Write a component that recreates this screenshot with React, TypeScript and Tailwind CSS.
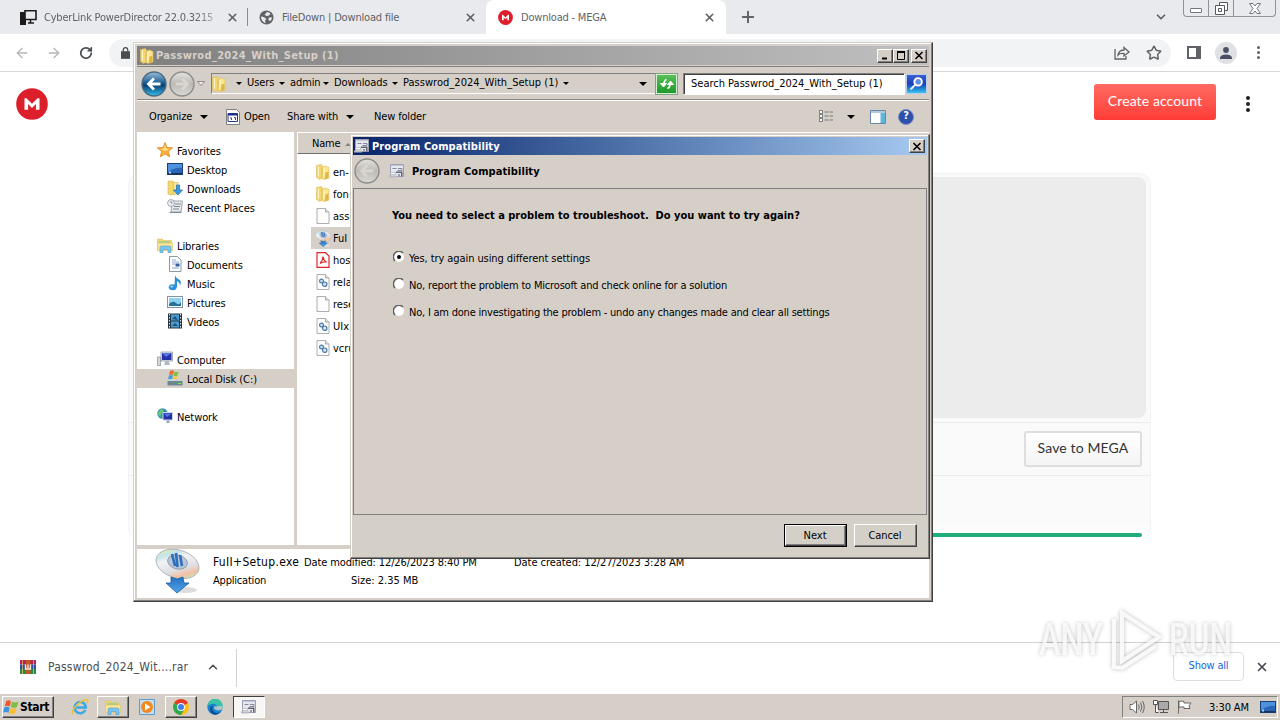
import React from 'react';
import { ChevronDown, ChevronUp, Plus, RotateCw, X, ArrowLeft, ArrowRight, Star } from 'lucide-react';

const RAISED = 'border border-t-white border-l-white border-r-[#404040] border-b-[#404040] shadow-[inset_-1px_-1px_0_#808080]';
const WINDOW = 'border border-t-[#d4d0c8] border-l-[#d4d0c8] border-r-[#404040] border-b-[#404040] shadow-[inset_-1px_-1px_0_#808080,inset_1px_1px_0_#fff]';
const FACE = 'bg-[#d6cfc8]';

/* ---------- icons ---------- */

const FolderIcon = ({ className = 'w-4 h-4' }) => (
  <svg viewBox="0 0 16 16" className={className}>
    <path d="M1.500 1.500l5-1 1 2V14l-3 1.500-3-2z" fill="#f3d66f" stroke="#dcbb55" strokeWidth=".6" />
    <path d="M7.500 3l3-1 3.500 1.500V14l-5 1.500-2-1z" fill="#fbe58f" stroke="#dcbb55" strokeWidth=".6" />
    <path d="M10.500 8.500l3-1V14l-4 1.500z" fill="#dfb647" />
    <path d="M3.500 2.500v10M9 4v9" stroke="#fff6c8" />
    <path d="M7 3v11" stroke="#d9b858" strokeWidth=".6" />
  </svg>
);

const StarIcon = () => (
  <svg viewBox="0 0 16 16" className="w-4 h-4">
    <path d="M8 .5l2 5 5.700.3-4.400 3.600 1.500 5.500L8 11.900l-4.800 3 1.500-5.500L.3 5.800 6 5.500z" fill="#fbb03a" stroke="#e58325" strokeWidth=".8" />
    <path d="M8 2.500l1 4 4 .3L8 9 3.500 7l3.300-.5z" fill="#ffdc80" />
  </svg>
);

const DesktopIcon = () => (
  <svg viewBox="0 0 16 16" className="w-4 h-4">
    <rect x=".5" y="2.500" width="15" height="11" fill="#2a66b8" stroke="#1b3f7a" />
    <path d="M1 3h14v4Q8 6 1 11z" fill="#4d92dd" />
    <path d="M1 12h14v1.500H1z" fill="#17325f" />
    <path d="M2 10.500h2v2H2z" fill="#a9d4f7" />
  </svg>
);

const DownloadsIcon = () => (
  <svg viewBox="0 0 16 16" className="w-4 h-4">
    <path d="M1 1h5l1 2v11l-3 1-3-1z" fill="#f3d66f" stroke="#d9b64a" strokeWidth=".6" />
    <path d="M6 2.500h5v11l-4 1.500z" fill="#fbe58f" stroke="#d9b64a" strokeWidth=".6" />
    <path d="M9.500 5h3v5H15.500L11 15 6.500 10h3z" fill="#3b9be0" stroke="#1b6cb0" strokeWidth=".7" />
  </svg>
);

const RecentIcon = () => (
  <svg viewBox="0 0 16 16" className="w-4 h-4">
    <path d="M5 2h10.500l-1.500 11H4z" fill="#e6e9ec" stroke="#8a939b" strokeWidth=".8" />
    <path d="M8 5h6M7 7.500h6M6 10h6M2.500 13.500h12" stroke="#7d8891" />
    <circle cx="4" cy="4" r="3.400" fill="#eef3f7" stroke="#8a939b" strokeWidth=".8" />
    <path d="M4 2v2h1.500" stroke="#5a6a78" fill="none" strokeWidth=".8" />
  </svg>
);

const LibraryIcon = ({ className = 'w-4 h-4' }) => (
  <svg viewBox="0 0 16 16" className={className}>
    <path d="M.5 2h5l1 1.500h8V13H.5z" fill="#f3d670" stroke="#dcc068" strokeWidth=".6" />
    <path d="M2 4h11v3H2z" fill="#a8d18b" />
    <path d="M.5 6h15v7.500H.5z" fill="#fbe794" stroke="#dcc068" strokeWidth=".6" />
    <path d="M3 15.500V10.500Q3 9 4.500 9h8Q14 9 14 10.500v5h-3v-3H6v3z" fill="#7cc4ee" stroke="#4a9ccb" strokeWidth=".6" />
  </svg>
);

const DocumentIcon = () => (
  <svg viewBox="0 0 16 16" className="w-4 h-4">
    <path d="M2.500 .5h8l3.500 3.500V15.500H2.500z" fill="#fff" stroke="#8b98a5" />
    <path d="M5 4h4M5 6h7M5 8h3M5 12h7" stroke="#8cacd0" />
    <path d="M8.500 7.500h4v3h-4z" fill="#2f5f9e" />
  </svg>
);

const MusicIcon = () => (
  <svg viewBox="0 0 16 16" className="w-4 h-4">
    <path d="M8 .5q1 2.500 4 4t1 6.500q0-3.500-3-5V12H7.500z" fill="#2c8fdb" />
    <ellipse cx="5.700" cy="12.300" rx="3.900" ry="3" fill="#2c8fdb" />
    <ellipse cx="4.800" cy="11.500" rx="1.700" ry="1" fill="#8fd0fa" />
  </svg>
);

const PictureIcon = () => (
  <svg viewBox="0 0 16 16" className="w-4 h-4">
    <rect x=".5" y="2.500" width="15" height="11" fill="#fff" stroke="#7d93a8" />
    <path d="M2 4h12v8H2z" fill="#8ed0f0" />
    <path d="M2 10q4-4 7-1t5-1v4H2z" fill="#24719c" />
  </svg>
);

const VideoIcon = () => (
  <svg viewBox="0 0 16 16" className="w-4 h-4">
    <path d="M1 .5h14v15H1z" fill="#263544" />
    <path d="M4 1.500h8v6H4zM4 8.500h8v6H4z" fill="#4a9bd0" />
    <path d="M2.500 1v14M13.500 1v14" stroke="#dfe7ee" strokeDasharray="1.500 1.500" />
    <path d="M5 6l3-3 3 4zM5 13l3-3 3 3z" fill="#1f5378" />
  </svg>
);

const ComputerIcon = () => (
  <svg viewBox="0 0 16 16" className="w-4 h-4">
    <path d="M.5 6h3v8.500h-3z" fill="#d4d9de" stroke="#808b95" strokeWidth=".7" />
    <path d="M4 1h11.500v9H4z" fill="#dfe5ee" stroke="#8390a3" strokeWidth=".7" />
    <path d="M5 2h9.500v7H5z" fill="#2431a8" />
    <path d="M5 2h9.500L9 6z" fill="#5a76e0" />
    <path d="M8.500 10h3l1.500 4H7z" fill="#b0b8c4" />
  </svg>
);

const DiskIcon = () => (
  <svg viewBox="0 0 16 16" className="w-4 h-4">
    <path d="M3 1q2-1.500 4 0L6 5Q4.500 4 2 5z" fill="#f06a35" />
    <path d="M7.500 1.500q2 1 4 0l-1 4q-2 1-4 0z" fill="#7cc142" />
    <path d="M2 5.500q2-1 4 0L5 9H1z" fill="#3e9de0" />
    <path d="M6.500 6q2 1 4 0L9.500 9h-4z" fill="#fbc436" />
    <path d="M1 9h12l2.500 2H.5z" fill="#c8d1d6" />
    <path d="M.5 11h15v4.500H.5z" fill="#6d8791" />
    <path d="M11 13h3v1h-3z" fill="#6df04f" />
  </svg>
);

const NetworkIcon = () => (
  <svg viewBox="0 0 16 16" className="w-4 h-4">
    <circle cx="5.500" cy="5.500" r="5.200" fill="#2f8fb8" />
    <path d="M1 5q2-4 5-4 1 3-1 4t-1 4Q1 8 1 5z" fill="#6cc57c" />
    <path d="M6 4.500h9.500V12H6z" fill="#2431a8" stroke="#cbd4e4" />
    <path d="M7 5.500h7.500L10 9z" fill="#5a76e0" />
    <path d="M9.500 12.500h3V15h-3z" fill="#9ba6b6" />
  </svg>
);

const FileIcon = ({ children }: { children?: React.ReactNode }) => (
  <svg viewBox="0 0 16 16" className="w-4 h-4">
    <path d="M2 .5h8.500l3.500 3.500v11.500H2z" fill="#fdfdfd" stroke="#9b9b9b" strokeWidth=".8" />
    <path d="M10.500.5V4H14" fill="#e8e8e8" stroke="#9b9b9b" strokeWidth=".8" />
    {children}
  </svg>
);

const DllIcon = () => (
  <FileIcon>
    <circle cx="6.500" cy="7" r="1.900" fill="#d5e6f6" stroke="#4a7ba8" strokeWidth="1.200" />
    <circle cx="9.700" cy="10.200" r="2.200" fill="#d5e6f6" stroke="#4a7ba8" strokeWidth="1.200" />
  </FileIcon>
);

const PdfIcon = () => (
  <svg viewBox="0 0 16 16" className="w-4 h-4">
    <path d="M2 .7h8.500L14 4v11.300H2z" fill="#fff" stroke="#e3262b" strokeWidth="1.200" />
    <path d="M5 11.500q3-3 3-7Q8.500 8.500 11.500 10 8 9.500 5 11.500z" fill="none" stroke="#e3262b" strokeWidth="1.200" />
  </svg>
);

const SetupIcon = ({ className = 'w-[17px] h-[17px]' }) => (
  <svg viewBox="0 0 46 46" className={className}>
    <defs>
      <linearGradient id="disc" x1="0" y1="0" x2="1" y2="1">
        <stop offset="0" stopColor="#d8c4e0" />
        <stop offset=".14" stopColor="#e2ecb8" />
        <stop offset=".24" stopColor="#c5e4e8" />
        <stop offset=".38" stopColor="#f1f2f4" />
        <stop offset=".62" stopColor="#dddfe2" />
        <stop offset=".76" stopColor="#f4bfa0" />
        <stop offset=".86" stopColor="#c6e8b8" />
        <stop offset="1" stopColor="#cfd3de" />
      </linearGradient>
      <linearGradient id="arrow" x1="0" y1="0" x2="0" y2="1">
        <stop offset="0" stopColor="#2672c4" />
        <stop offset="1" stopColor="#4fa3ea" />
      </linearGradient>
    </defs>
    <ellipse cx="31" cy="42" rx="11" ry="3" fill="#ddd" />
    <ellipse cx="22.500" cy="16" rx="22" ry="14" transform="rotate(16 22.500 16)" fill="url(#disc)" stroke="#a9adb3" strokeWidth=".8" />
    <ellipse cx="22.500" cy="14" rx="10" ry="7" transform="rotate(14 22.500 14)" fill="#b9c6d4" stroke="#8997a8" strokeWidth=".9" />
    <path d="M17 6l3 12M21 5l1.500 14M25 7l2 11" stroke="#2b6fc0" strokeWidth="2.600" />
    <path d="M16 29l6 2 6-2 1 6h5L22 45 11 35h5z" fill="url(#arrow)" stroke="#1f5c9f" strokeWidth=".8" />
  </svg>
);

const CompatIcon = ({ className = 'w-4 h-4' }) => (
  <svg viewBox="0 0 16 16" className={className}>
    <path d="M1.500 1.500h13v12h-13z" fill="#e6e7ef" stroke="#9da0b4" />
    <path d="M2 2h12v1H2z" fill="#c3c7dc" />
    <path d="M3.500 5.500h4M9 5.500h4v2H8.500" fill="none" stroke="#85889a" />
    <path d="M7 8.500h6.500v5H12V10H7z" fill="#62656f" />
    <path d="M1.500 9.500h5v2h-5z" fill="#fff" stroke="#a0a2ac" strokeWidth=".6" />
    <path d="M0 12.500h8v2H0z" fill="#b9bbc4" />
    <path d="M9 11h2v2.500H9z" fill="#9a9da8" />
  </svg>
);

const OpenIcon = () => (
  <svg viewBox="0 0 14 16" className="w-[14px] h-4">
    <path d="M.5.500h10l3 3v12H.5z" fill="#fff" stroke="#808080" />
    <path d="M2 4.500h9.500v8H2z" fill="#fff" stroke="#223a8a" />
    <path d="M2 4.500h9.500v2H2z" fill="#1d2f8a" />
    <path d="M4 9h1.500v2M8 8.500h1.500V11" stroke="#3a4a9a" fill="none" />
  </svg>
);

const MegaLogo = ({ className = '' }) => (
  <svg viewBox="0 0 32 32" className={className}>
    <circle cx="16" cy="16" r="15.800" fill="#dc1f2b" />
    <path d="M8.500 21.800V10.200h1.900l5.600 5.600 5.600-5.600h1.900v11.600h-3.600v-5.700L16 19.900l-3.900-3.800v5.700z" fill="#fff" />
  </svg>
);

const GlobeIcon = () => (
  <svg viewBox="0 0 16 16" className="w-[15px] h-[15px]">
    <circle cx="8" cy="8" r="7.500" fill="#5f6368" />
    <path d="M2 7l3 .5 3 2-1.500 1.500L7 14Q2.500 12.500 2 7zM8.500 2l3 1 .5 1.500-2 1.500-2 .500L6 5zM10.500 8l3.500 0q-.5 3-2.500 4l-1.500-2z" fill="#e8eaed" />
  </svg>
);

const PcIcon = () => (
  <svg viewBox="0 0 17 16" className="w-[17px] h-4">
    <path d="M0 3h6v13H0z" fill="#1c1c1c" />
    <path d="M5 1.800h11v8.700H5z" fill="#e8eaed" stroke="#1c1c1c" strokeWidth="1.600" />
    <path d="M8 14h6M10.500 11v3" stroke="#1c1c1c" strokeWidth="1.500" />
  </svg>
);

const RarIcon = () => (
  <svg viewBox="0 0 16 16" className="w-4 h-4">
    <path d="M0 1h16v4.500H0z" fill="#b0245a" />
    <path d="M0 5.500h16V10H0z" fill="#2c52a8" />
    <path d="M0 10h16v5H0z" fill="#2b8a43" />
    <path d="M6 1h4.500v14H6z" fill="#c5571f" />
    <path d="M5.500 5.500v4.500h5V5.500M8 5.500V9" fill="none" stroke="#f5eee0" strokeWidth="1.300" />
    <path d="M2.500 1v14M13.500 1v14" stroke="#f0c26a" strokeWidth=".7" />
  </svg>
);

const ChromeIcon = () => (
  <svg viewBox="0 0 16 16" className="w-4 h-4">
    <circle cx="8" cy="8" r="8" fill="#fbc116" />
    <path d="M8 8L1.100 4A8 8 0 0 1 14.900 4z" fill="#e33b2e" />
    <path d="M8 8L1.100 4A8 8 0 0 0 8 16l3-5z" fill="#2da94f" />
    <circle cx="8" cy="8" r="3.900" fill="#fff" />
    <circle cx="8" cy="8" r="3" fill="#3f7fe8" />
  </svg>
);

const EdgeIcon = () => (
  <svg viewBox="0 0 16 16" className="w-4 h-4">
    <circle cx="8" cy="8" r="7.700" fill="#1583cf" />
    <path d="M.5 7A7.600 7.600 0 0 1 15.700 7.500q0 3-3.300 3-2.500 0-2.400-1.500.8-1 0-2.300Q7 3.500 3 5.500.8 6.500.5 7z" fill="#37c3a5" />
    <path d="M6 7q-2 3 .5 5.500t7 .5Q11 16 7.500 15.700 2.500 14 3 9q.5-2 3-2z" fill="#0b4c93" />
    <path d="M7 7.500q-.8 4 5 4l3-1q1-1 .7-3l-2.500-.5z" fill="#d6cfc8" opacity=".75" />
  </svg>
);

const IeIcon = () => (
  <svg viewBox="0 0 18 18" className="w-[18px] h-[18px]">
    <path d="M14.300 12A5.600 5.600 0 1 1 14.800 9.500H5" fill="none" stroke="#3fa9e2" strokeWidth="2.600" />
    <path d="M2 16Q-.5 14 5 8t11-6.500Q18 2 16 5" fill="none" stroke="#f0bf3a" strokeWidth="1.500" />
  </svg>
);

const WmpIcon = () => (
  <svg viewBox="0 0 16 16" className="w-4 h-4">
    <path d="M.5.500h15v15H.5z" fill="#c3def2" stroke="#5f9ccc" />
    <circle cx="8" cy="8" r="6" fill="#f08a1e" />
    <path d="M6 4.500v7L11.500 8z" fill="#fff" />
  </svg>
);

const WindowsFlag = () => (
  <svg viewBox="0 0 16 16" className="w-[17px] h-[17px] shrink-0">
    <path d="M3 2q2-1.500 4.500 0L6.500 7Q4 5.500 1.500 7z" fill="#ee5a2b" />
    <path d="M8.500 2.500q2.500 1.500 6 0l-1.500 5q-2.500 1.500-5.500 0z" fill="#7bbf3a" />
    <path d="M1.200 8q2.500-1.500 5 0l-1 5Q2.700 11.500 0 13z" fill="#3c95dc" />
    <path d="M7.200 8.500q2.500 1.500 5.500 0l-1.500 5q-2.500 1.500-5.500 0z" fill="#f9bd2d" />
  </svg>
);

const Caret = ({ small = false }) => (
  <svg viewBox="0 0 8 4" className={small ? 'w-[6px] h-[3px]' : 'w-[8px] h-[4px]'}>
    <path d="M0 0h8L4 4z" fill="#000" />
  </svg>
);

const RoundArrow = ({ dir, active = false }: { dir: 'left' | 'right'; active?: boolean }) => (
  <svg viewBox="0 0 26 26" className="w-[26px] h-[26px]">
    <defs>
      <linearGradient id="blueBall" x1="0" y1="0" x2="0" y2="1">
        <stop offset="0" stopColor="#9dbfd8" />
        <stop offset=".45" stopColor="#1c5f95" />
        <stop offset=".55" stopColor="#0b3f70" />
        <stop offset="1" stopColor="#35c0ee" />
      </linearGradient>
      <linearGradient id="greyBall" x1="0" y1="0" x2="0" y2="1">
        <stop offset="0" stopColor="#e4e2df" />
        <stop offset=".5" stopColor="#bdbab6" />
        <stop offset="1" stopColor="#dcdad6" />
      </linearGradient>
    </defs>
    <circle cx="13" cy="13" r="12" fill={active ? 'url(#blueBall)' : 'url(#greyBall)'} stroke={active ? '#4c6c85' : '#8d8c8a'} strokeWidth="1.400" />
    <g transform={dir === 'right' ? 'matrix(-1 0 0 1 26 0)' : undefined}>
      <path d="M19.500 13H8M13 7.500L7.500 13l5.500 5.500" fill="none" stroke={active ? '#fff' : '#d9d6d2'} strokeWidth="2.800" />
    </g>
  </svg>
);

/* ---------- browser ---------- */

const Browser = () => (
  <div className="flex-1 flex flex-col bg-white text-[#5f6368]">
    <div className="h-[34px] shrink-0 bg-[#e8eaed] flex items-start text-[11px]">
      <div className="w-[247px] h-[34px] pl-[20px] pr-[8px] flex items-center">
        <PcIcon />
        <span className="ml-[7px] pt-[2px] w-[172px] whitespace-nowrap tracking-[-0.2px] [mask-image:linear-gradient(90deg,#000_88%,#0005)]">CyberLink PowerDirector 22.0.3215</span>
        <X className="ml-[10px] w-[13px] h-[13px] shrink-0" strokeWidth={3} />
      </div>
      <div className="w-px h-[18px] mt-2 bg-[#8a8d91]" />
      <div className="w-[238px] h-[34px] pl-[11px] pr-[9px] flex items-center">
        <GlobeIcon />
        <span className="ml-[8px] pt-[2px] flex-1 whitespace-nowrap tracking-[-0.180px]">FileDown | Download file</span>
        <X className="w-[13px] h-[13px]" strokeWidth={3} />
      </div>
      <div className="w-[240px] h-[34px] pl-[12px] pr-[10px] flex items-center bg-white rounded-t-lg">
        <MegaLogo className="w-[15px] h-[15px]" />
        <span className="ml-[8px] pt-[2px] flex-1 whitespace-nowrap tracking-[-0.2px]">Download - MEGA</span>
        <X className="w-[13px] h-[13px]" strokeWidth={3} />
      </div>
      <Plus className="ml-[13px] mt-2 w-[18px] h-[18px]" strokeWidth={2.6} />
      <ChevronDown className="ml-auto mr-[15px] mt-[10px] w-[14px] h-[14px]" strokeWidth={3} />
      <div className="w-[93px] h-[17px] mr-[4px] flex border border-t-0 border-[#8f9296] rounded-b-[4px]">
        <div className="w-[25px] border-r border-[#8f9296] flex justify-center pt-[8px]">
          <div className="w-3 h-[5px] border border-[#73767a] bg-white rounded-[1px]" />
        </div>
        <div className="w-[25px] border-r border-[#8f9296] flex justify-center pt-[2px]">
          <svg viewBox="0 0 13 13" className="w-[13px] h-[13px]" fill="#fff" stroke="#55585c">
            <path d="M4.500.500h8v8h-8z" />
            <path d="M.5 3.500h9v9h-9zM3.500 6.500h3v3h-3z" />
          </svg>
        </div>
        <div className="flex-1 flex justify-center pt-[3px]">
          <svg viewBox="0 0 12 11" className="w-3 h-[11px]" fill="#fff" stroke="#73767a">
            <path d="M.5.500h3.500l2 2.500 2-2.500h3.500L8 5.500l3.500 5H8L6 8l-2 2.500H.5L4 5.500z" />
          </svg>
        </div>
      </div>
    </div>

    <div className="h-[38px] shrink-0 flex items-center border-b border-[#d5d7da]">
      <ArrowLeft className="ml-[14px] w-4 h-4 text-[#b5b7ba]" />
      <ArrowRight className="ml-4 w-4 h-4 text-[#b5b7ba]" />
      <RotateCw className="ml-[17px] w-[14px] h-[14px] text-[#4a4d51]" strokeWidth={3} />
      <div className="ml-[16px] w-[1062px] h-[28px] rounded-full bg-[#f1f3f4] flex items-center justify-between pl-[12px] pr-[9px]">
        <svg viewBox="0 0 10 13" className="w-[9px] h-[12px]">
          <path d="M0 4.500h10V13H0z" fill="#4a4d51" />
          <path d="M2.500 5V3a2.500 2.500 0 0 1 5 0v2" fill="none" stroke="#4a4d51" strokeWidth="1.400" />
        </svg>
        <div className="flex items-center gap-[16px]">
          <svg viewBox="0 0 16 14" className="w-4 h-[14px]" fill="none" stroke="#5f6368" strokeWidth="1.300">
            <path d="M1 3v10h11v-3" />
            <path d="M4 9q1-5 6-5V1.500L15 6l-5 4V7.500Q6 7 4 9z" />
          </svg>
          <Star className="w-4 h-4" strokeWidth={2.3} />
        </div>
      </div>
      <div className="ml-[16px] w-[14px] h-[13px] border-2 border-r-[5px] border-[#5f6368]" />
      <div className="ml-[14px] w-[22px] h-[22px] rounded-full bg-[#dfe1e5] flex justify-center pt-[5px]">
        <svg viewBox="0 0 12 12" className="w-3 h-3" fill="#4b5066">
          <circle cx="6" cy="3" r="2.900" />
          <path d="M0 12v-1.500Q1 7.500 6 7.500t6 3V12z" />
        </svg>
      </div>
      <div className="ml-[20px] flex flex-col gap-[2px]">
        <i className="w-[3px] h-[3px] rounded-full bg-[#5f6368]" />
        <i className="w-[3px] h-[3px] rounded-full bg-[#5f6368]" />
        <i className="w-[3px] h-[3px] rounded-full bg-[#5f6368]" />
      </div>
    </div>

    <div className="h-[570px] shrink-0 font-[Lato,sans-serif] text-[#303233]">
      <div className="h-[101px] pt-[12px] pl-4 pr-[30px] flex justify-between">
        <MegaLogo className="mt-1 w-8 h-8" />
        <div className="flex">
          <div className="w-[122px] h-9 pb-[3px] rounded-[3px] bg-gradient-to-b from-[#ff6a61] to-[#ff3a36] text-white text-[14px] tracking-[0.1px] flex items-center justify-center">Create account</div>
          <div className="ml-[30px] mt-[12px] flex flex-col gap-[2px]">
            <i className="w-[4px] h-[4px] rounded-full bg-[#222]" />
            <i className="w-[4px] h-[4px] rounded-full bg-[#222]" />
            <i className="w-[4px] h-[4px] rounded-full bg-[#222]" />
          </div>
        </div>
      </div>
      <div className="ml-[128px] w-[1023px] h-[367px] rounded-xl border border-b-0 border-[#f3f3f3] bg-gradient-to-b from-[#fafafa] from-95% to-white pt-[3px]">
        <div className="mx-1 h-[241px] rounded-lg bg-[#ececec]" />
        <div className="mt-[4px] h-[54px] border-y border-[#ebebeb] flex items-center justify-end pr-[8px]">
          <div className="w-[118px] h-[36px] pb-[3px] rounded-[3px] border-2 border-[#dedede] bg-gradient-to-b from-white to-[#f4f4f4] text-[14px] tracking-[0.130px] flex items-center justify-center">Save to MEGA</div>
        </div>
        <div className="mt-[57px] ml-2 mr-[8px] h-[4px] rounded-full bg-[#1fae79]" />
      </div>
    </div>

    <div className="h-[51px] shrink-0 border-t border-[#cfd1d3] flex items-center pl-[20px] pr-[11px] text-[#4a4d51]">
      <span className="mb-[2px]"><RarIcon /></span>
      <span className="ml-3 mb-[2px] w-[145px] text-[12px] tracking-[0.2px] whitespace-nowrap">Passwrod_2024_Wit....rar</span>
      <ChevronUp className="ml-[13px] mb-[2px] w-[14px] h-[14px]" strokeWidth={2.5} />
      <div className="ml-[16px] w-px h-[38px] bg-[#d0d2d4]" />
      <div className="ml-auto mb-[3px] w-[71px] h-[29px] rounded border border-[#dcdee1] flex items-center justify-center text-[11px] tracking-[-0.2px] text-[#1a67d8]">Show all</div>
      <X className="ml-[11px] mb-[2px] w-[14px] h-[14px]" strokeWidth={3} />
    </div>
  </div>
);

/* ---------- explorer ---------- */

const NAV = [
  { label: 'Favorites', icon: <StarIcon />, root: true },
  { label: 'Desktop', icon: <DesktopIcon /> },
  { label: 'Downloads', icon: <DownloadsIcon /> },
  { label: 'Recent Places', icon: <RecentIcon /> },
  null,
  { label: 'Libraries', icon: <LibraryIcon />, root: true },
  { label: 'Documents', icon: <DocumentIcon /> },
  { label: 'Music', icon: <MusicIcon /> },
  { label: 'Pictures', icon: <PictureIcon /> },
  { label: 'Videos', icon: <VideoIcon /> },
  null,
  { label: 'Computer', icon: <ComputerIcon />, root: true },
  { label: 'Local Disk (C:)', icon: <DiskIcon />, selected: true },
  null,
  { label: 'Network', icon: <NetworkIcon />, root: true },
];

const FILES = [
  { name: 'en-', icon: <FolderIcon /> },
  { name: 'fon', icon: <FolderIcon /> },
  { name: 'ass', icon: <FileIcon /> },
  { name: 'FuI', icon: <SetupIcon />, selected: true },
  { name: 'hos', icon: <PdfIcon /> },
  { name: 'rela', icon: <DllIcon /> },
  { name: 'rese', icon: <FileIcon /> },
  { name: 'UIx', icon: <DllIcon /> },
  { name: 'vcru', icon: <DllIcon /> },
];

const CaptionButton = ({ children, className = '' }: { children: React.ReactNode; className?: string }) => (
  <div className={`w-4 h-[14px] flex items-center justify-center ${FACE} ${RAISED} ${className}`}>
    <svg viewBox="0 0 10 9" className="w-[10px] h-[9px] shrink-0" fill="none" stroke="#000">{children}</svg>
  </div>
);

const Explorer = () => (
  <div className={`absolute left-[133px] top-[42px] w-[800px] h-[560px] p-[3px] flex flex-col ${FACE} ${WINDOW}`}>
    <div className="h-[19px] shrink-0 pl-[2px] pr-[2px] flex items-center bg-gradient-to-r from-[#808080] to-[#c0c0c0] text-[#d6cfc8] font-bold text-[11px]">
      <FolderIcon />
      <span className="ml-[1px] pt-px tracking-[0.320px]">Passwrod_2024_With_Setup (1)</span>
      <CaptionButton className="ml-auto"><path d="M2 7.500h5" strokeWidth="2" /></CaptionButton>
      <CaptionButton><path d="M1 1h8" strokeWidth="2" /><path d="M1.500 0v8.500h7V0" /></CaptionButton>
      <CaptionButton className="ml-[2px]"><path d="M1.500 1l7 7M8.500 1l-7 7" strokeWidth="1.600" /></CaptionButton>
    </div>

    <div className="h-[35px] shrink-0 mt-px pl-[4px] flex items-center border-t border-[#808080] border-b border-b-white shadow-[inset_0_-1px_0_#8a8680]">
      <RoundArrow dir="left" active />
      <span className="ml-[2px]"><RoundArrow dir="right" /></span>
      <svg viewBox="0 0 8 5" className="ml-[2px] w-2 h-[5px]"><path d="M.5.500h7L4 4.500z" fill="#eee" stroke="#777" strokeWidth=".8" /></svg>
      <div className="ml-[6px] w-[444px] h-[21px] border-t border-l border-[#808080] border-b border-b-white flex items-center">
        <span className="-ml-px"><FolderIcon /></span>
        <div className="ml-[9px] flex items-center gap-[5px] whitespace-nowrap tracking-[-0.1px]">
          <Caret small /><span className="w-[27px]">Users</span>
          <Caret small /><span className="w-[28px]">admin</span>
          <Caret small /><span className="w-[53px]">Downloads</span>
          <Caret small /><span className="tracking-[0.030px]">Passwrod_2024_With_Setup (1)</span>
          <Caret small />
        </div>
        <span className="ml-auto mr-[8px]"><Caret /></span>
      </div>
      <div className="ml-px w-[21px] h-[20px] bg-gradient-to-b from-[#58bf58] to-[#189a28] border border-[#d5ecd3] outline outline-1 outline-[#7da77d] flex items-center justify-center">
        <svg viewBox="0 0 16 14" className="w-4 h-[14px]" fill="#fff" stroke="#fff">
          <path d="M7.500 2.500Q5 3.500 4.800 8" fill="none" strokeWidth="1.800" />
          <path d="M1.500 6.500h6L4.500 10z" />
          <path d="M8.500 11.500q2.500-1 2.700-5.500" fill="none" strokeWidth="1.800" />
          <path d="M8.500 7.500h6L11.500 4z" />
        </svg>
      </div>
      <div className="ml-[6px] w-[222px] h-[22px] bg-white border border-[#808080] border-b-white border-r-white shadow-[inset_1px_1px_0_#404040] pl-[7px] flex items-center whitespace-nowrap">
        <span className="pt-px">Search Passwrod_2024_With_Setup (1)</span>
      </div>
      <div className="ml-px w-[21px] h-[20px] bg-gradient-to-b from-[#3a5fd0] via-[#1a3fb8] to-[#3ec2ee] border border-[#b9cfe8] flex items-center justify-center">
        <svg viewBox="0 0 14 14" className="w-[15px] h-[15px]" fill="#5f8fe0" stroke="#fff" strokeWidth="1.800">
          <circle cx="8.500" cy="5.500" r="3.500" />
          <path d="M6 8l-4.500 4.500" />
        </svg>
      </div>
    </div>

    <div className="h-[31px] shrink-0 pl-[12px] pr-[15px] flex items-center whitespace-nowrap tracking-[-0.150px]">
      <span className="w-[43px] pt-px">Organize</span>
      <span className="ml-[8px]"><Caret /></span>
      <span className="ml-[18px]"><OpenIcon /></span>
      <span className="ml-[4px] w-[27px] pt-px">Open</span>
      <span className="ml-[16px] w-[52px] pt-px">Share with</span>
      <span className="ml-[7px]"><Caret /></span>
      <span className="ml-[20px] pt-px">New folder</span>
      <div className="ml-auto flex items-center">
        <svg viewBox="0 0 16 13" className="w-4 h-[13px]" fill="#fff" stroke="#777" strokeWidth="1">
          <path d="M1.500.500h3v3h-3zM1.500 4.500h3v3h-3zM1.500 8.500h3v3h-3z" />
          <path d="M6.500 2h4M11.500 2H15M6.500 6h4M11.500 6H15M6.500 10h4M11.500 10H15" />
        </svg>
        <span className="ml-[13px]"><Caret /></span>
        <svg viewBox="0 0 16 14" className="ml-[15px] w-4 h-[14px]">
          <path d="M.5.500h15v13H.5z" fill="#fff" stroke="#6788a8" />
          <path d="M1 1h14v2H1z" fill="#b4c9dc" />
          <path d="M10.500 3h4.500v10h-4.500z" fill="#5db7dc" />
        </svg>
        <div className="ml-[12px] w-4 h-4 rounded-full bg-[#2d50ad] border border-[#7c8cc0] text-white text-[11px] font-bold flex items-center justify-center">?</div>
      </div>
    </div>

    <div className="h-[413px] shrink-0 flex">
      <div className="w-[157px] bg-white pt-[9px]">
        {NAV.map((item, i) =>
          item ? (
            <div key={i} className={`h-[19px] flex items-center gap-[4px] whitespace-nowrap ${item.root ? 'pl-5' : 'pl-[30px]'} ${item.selected ? 'bg-[#d6cfc8]' : ''}`}>
              <span className="w-4 shrink-0 -mt-px">{item.icon}</span>
              <span className="pt-[3px] tracking-[-0.080px]">{item.label}</span>
            </div>
          ) : (
            <div key={i} className="h-[19px]" />
          )
        )}
      </div>
      <div className="w-[3px]" />
      <div className="flex-1 bg-white">
        <div className={`h-[22px] pl-[14px] pt-[3px] flex items-center gap-[5px] ${FACE} border-t border-l border-white border-b border-b-[#707070]`}>
          <span className="tracking-[-0.2px]">Name</span>
          <svg viewBox="0 0 6 3" className="w-[6px] h-[3px]"><path d="M0 3h6L3 0z" fill="#808080" /></svg>
        </div>
        <div className="w-[54px] pl-[14px] pt-[7px]">
          {FILES.map((file) => (
            <div key={file.name} className={`h-[22px] pl-[4px] flex items-center gap-[2px] whitespace-nowrap ${file.selected ? 'bg-[#d6cfc8]' : ''}`}>
              <span className="w-4 shrink-0">{file.icon}</span>
              <span className="pt-[2px]">{file.name}</span>
            </div>
          ))}
        </div>
      </div>
    </div>

    <div className="flex-1 mt-[4px] bg-white flex">
      <SetupIcon className="ml-[18px] -mt-px w-[46px] h-[46px]" />
      <div className="ml-[12px] pt-[4px] leading-[18px] whitespace-nowrap">
        <div className="flex">
          <span className="w-[91px] text-[12px] tracking-[0.320px]">FuII+Setup.exe</span>
          <span className="w-[210px] pt-px tracking-[-0.120px]">Date modified: 12/26/2023 8:40 PM</span>
          <span className="pt-px tracking-[-0.050px]">Date created: 12/27/2023 3:28 AM</span>
        </div>
        <div className="flex">
          <span className="w-[138px] tracking-[-0.2px]">Application</span>
          <span>Size: 2.35 MB</span>
        </div>
      </div>
    </div>
  </div>
);

/* ---------- dialog ---------- */

const Option = ({ label, checked = false, className = '' }: { label: string; checked?: boolean; className?: string }) => (
  <label className={`h-[27px] flex items-center gap-[4px] whitespace-nowrap ${className}`}>
    <svg viewBox="0 0 12 12" className="w-3 h-3 -mt-[3px]">
      <circle cx="6" cy="6" r="5" fill="#fff" />
      <path d="M2 10A5.500 5.500 0 0 1 10 2" fill="none" stroke="#606060" strokeWidth="1.500" />
      {checked && <circle cx="6" cy="6" r="2" fill="#000" />}
    </svg>
    <span className="pt-px">{label}</span>
  </label>
);

const CompatibilityDialog = () => (
  <div className={`absolute left-[350px] top-[134px] w-[580px] h-[425px] p-[2px] flex flex-col ${FACE} ${WINDOW}`}>
    <div className="h-[18px] shrink-0 pl-[1px] pr-[2px] flex items-center bg-gradient-to-r from-[#0a246a] to-[#a6caf0] text-white font-bold">
      <CompatIcon />
      <span className="ml-[2px] pt-[2px] tracking-[0.080px]">Program Compatibility</span>
      <CaptionButton className="ml-auto"><path d="M1.500 1l7 7M8.500 1l-7 7" strokeWidth="1.600" /></CaptionButton>
    </div>
    <div className="h-[33px] shrink-0 pl-[1px] pb-[2px] flex items-center font-bold">
      <RoundArrow dir="left" />
      <CompatIcon className="ml-[9px] w-4 h-4" />
      <span className="ml-[7px] pt-[3px] tracking-[0.080px]">Program Compatibility</span>
    </div>
    <div className="h-[327px] shrink-0 border border-[#808080] pl-[38px] pt-[20px]">
      <p className="font-bold whitespace-pre leading-[14px]">You need to select a problem to troubleshoot.  Do you want to try again?</p>
      <div className="mt-[22px] pl-[1px]">
        <Option label="Yes, try again using different settings" checked className="tracking-[-0.080px]" />
        <Option label="No, report the problem to Microsoft and check online for a solution" className="tracking-[-0.180px]" />
        <Option label="No, I am done investigating the problem - undo any changes made and clear all settings" className="tracking-[-0.215px]" />
      </div>
    </div>
    <div className="flex-1 bg-[#d4d0c8] flex justify-end gap-[7px] pt-[9px] pr-[10px]">
      <div className="w-[63px] h-[23px] border border-black">
        <div className={`h-full pt-px pr-px flex items-center justify-center ${RAISED}`}>Next</div>
      </div>
      <div className={`w-[63px] h-[23px] pt-px pr-px flex items-center justify-center tracking-[-0.1px] ${RAISED}`}>Cancel</div>
    </div>
  </div>
);

/* ---------- taskbar ---------- */

const Taskbar = () => (
  <div className={`h-[27px] shrink-0 flex items-center pl-[2px] pr-[2px] ${FACE} border-t border-white`}>
    <div className={`w-[52px] h-[22px] flex items-center font-bold text-[12px] tracking-[-0.3px] ${RAISED}`}>
      <WindowsFlag />
      <span>Start</span>
    </div>
    <span className="ml-[17px]"><IeIcon /></span>
    <div className={`ml-[8px] w-[32px] h-[22px] flex items-center justify-center ${RAISED}`}><LibraryIcon /></div>
    <span className="ml-[10px]"><WmpIcon /></span>
    <div className={`ml-[10px] w-[32px] h-[22px] flex items-center justify-center ${RAISED}`}><ChromeIcon /></div>
    <span className="ml-[10px]"><EdgeIcon /></span>
    <div className="ml-[10px] w-[32px] h-[22px] flex items-center justify-center bg-[#f8f7f5] border border-[#404040] border-r-white border-b-white"><CompatIcon /></div>
    <div className="ml-auto w-[156px] h-[22px] pl-[6px] flex items-center border border-[#808080] border-r-white border-b-white">
      <svg viewBox="0 0 16 14" className="w-4 h-[14px]" fill="#fff" stroke="#666">
        <path d="M1 4.500h2.500L7.500 1v12L3.500 9.500H1z" />
        <path d="M9.500 4.500q1.500 2.500 0 5M11.500 2.500q3 4.500 0 9M13.500 1q3.500 6 0 12" fill="none" />
      </svg>
      <svg viewBox="0 0 16 14" className="ml-[8px] w-4 h-[14px]" fill="#fff" stroke="#555">
        <path d="M5.500 1.500h10v8h-10z" fill="#aaa" />
        <path d="M7 12.500h8M10.500 10v2M.5.500h4v4h-4zM2.500 4.500v8h3" />
      </svg>
      <svg viewBox="0 0 16 14" className="ml-[8px] w-4 h-[14px]" fill="#fff" stroke="#666">
        <path d="M1.500.500v13" />
        <path d="M2 1.500q3-1 5 0v1.500h7l-2 3 1 2.500H7V7Q4 6.500 2 7.500z" />
      </svg>
      <span className="ml-[16px] pt-[2px] w-[43px] whitespace-nowrap tracking-[-0.1px]">3:30 AM</span>
      <span className="ml-[8px]"><DesktopIcon /></span>
    </div>
  </div>
);

const Watermark = () => (
  <div className="absolute left-[1039px] top-[608px] w-[196px] h-[64px] flex items-center justify-between font-[Roboto,sans-serif] text-[45px] font-medium text-white/80 [filter:drop-shadow(0_0_2px_rgba(0,0,0,0.3))]">
    <span className="w-[64px] origin-left scale-x-[0.72]">ANY</span>
    <svg viewBox="0 0 56 64" className="w-[56px] h-[64px]" fill="none" stroke="#fff" strokeOpacity=".85" strokeWidth="4">
      <path d="M14 5l37 24L14 53z" />
      <path d="M6 11v48l8 1 34-22" />
    </svg>
    <span className="w-[66px] origin-left scale-x-[0.7]">RUN</span>
  </div>
);

const App = () => (
  <div className="relative w-[1280px] h-[720px] overflow-hidden flex flex-col font-['DejaVu_Sans_Condensed','DejaVu_Sans',sans-serif] text-[11px] text-black">
    <Browser />
    <Taskbar />
    <Explorer />
    <CompatibilityDialog />
    <Watermark />
  </div>
);

export default App;
